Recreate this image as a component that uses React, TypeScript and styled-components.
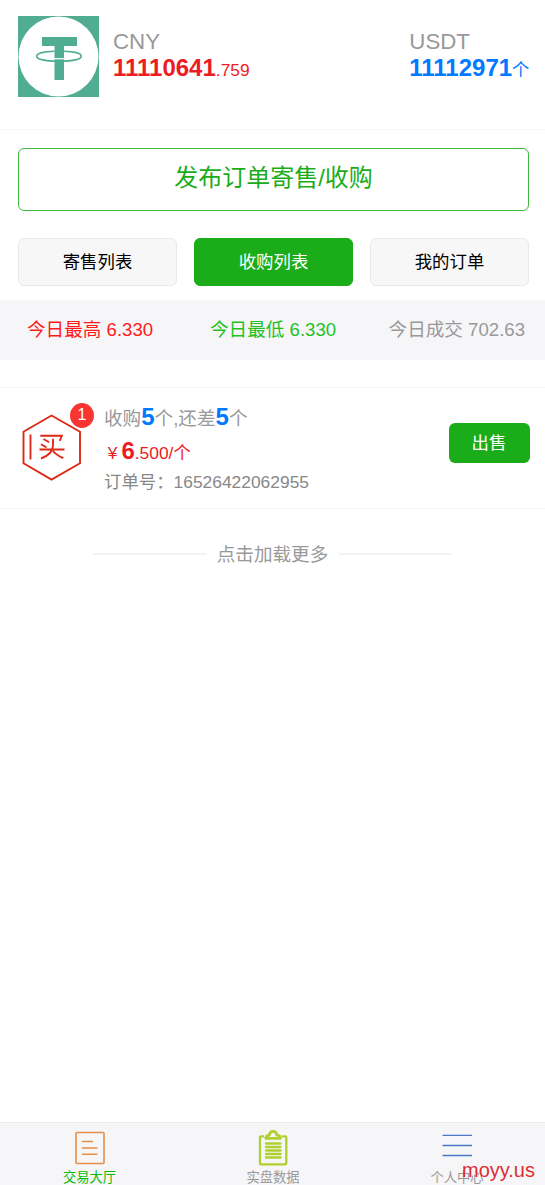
import React from 'react';
import styled, { createGlobalStyle } from 'styled-components';

const GlobalStyle = createGlobalStyle`
  * { box-sizing: border-box; }
  body {
    margin: 0;
    background: #fff;
    font-family: 'Liberation Sans', 'Noto Sans CJK SC', sans-serif;
    font-weight: 400;
  }
  button { font: inherit; padding: 0; cursor: pointer; }
`;

const Page = styled.div`
  display: flex;
  flex-direction: column;
  height: 1185px;
  overflow: hidden;
`;

const Header = styled.header`
  display: flex;
  height: 130px;
  padding: 16px 15.500px 0 18px;
  border-bottom: 1px solid #f7f7f7;
`;

const Balance = styled.div<{ $push?: boolean }>`
  margin-left: ${(p) => (p.$push ? 'auto' : '14px')};
  padding-top: 13px;
  white-space: nowrap;
`;

const Currency = styled.div`
  font-size: 22.3px;
  line-height: 26px;
  color: #999;
`;

const Amount = styled.div<{ $color: string }>`
  font-size: 17.4px;
  line-height: 30px;
  color: ${(p) => p.$color};
`;

const Big = styled.b<{ $color?: string }>`
  font-size: 24px;
  font-weight: 700;
  line-height: 24px;
  color: ${(p) => p.$color ?? 'inherit'};
`;

const Publish = styled.button`
  height: 63px;
  margin: 18px 16px 0 18px;
  border: 1px solid #3fb83f;
  border-radius: 6px;
  background: #fff;
  color: #1aad19;
  font-size: 24px;
  line-height: 56px;
  padding-bottom: 3px;
`;

const Tabs = styled.nav`
  display: grid;
  grid-template-columns: 159px 159px 159px;
  justify-content: space-between;
  height: 48px;
  margin: 27px 16px 14px 18px;
`;

const Tab = styled.button<{ $active?: boolean }>`
  border: 1px solid ${(p) => (p.$active ? '#1aad19' : '#e9e9e9')};
  border-radius: 6px;
  background: ${(p) => (p.$active ? '#1aad19' : '#f7f7f7')};
  color: ${(p) => (p.$active ? '#fff' : '#000')};
  font-size: 17.4px;
  line-height: 44px;
`;

const Stats = styled.section`
  display: grid;
  grid-template-columns: 183px 1fr auto;
  height: 60px;
  padding: 0 20px 0 27px;
  background: #f6f6f9;
`;

const Stat = styled.span<{ $color: string }>`
  color: ${(p) => p.$color};
  font-size: 18.6px;
  line-height: 59px;
  white-space: nowrap;
`;

const Order = styled.article`
  display: flex;
  height: 122px;
  margin-top: 27px;
  padding: 0 15.500px 0 22px;
  border-top: 1px solid #f5f5f5;
  border-bottom: 1px solid #f5f5f5;
`;

const OrderIcon = styled.div`
  position: relative;
  width: 60px;
  height: 68px;
  margin-top: 25px;
`;

const Badge = styled.span`
  position: absolute;
  top: -10px;
  left: 48px;
  width: 24px;
  height: 25px;
  border-radius: 50%;
  background: #f83530;
  color: #fff;
  font-size: 16px;
  line-height: 23px;
  text-align: center;
`;

const OrderInfo = styled.div`
  flex: 1;
  margin-left: 22px;
  padding-top: 13px;
  white-space: nowrap;
`;

const OrderLine = styled.div<{ $size: number; $height: number; $color: string }>`
  font-size: ${(p) => p.$size}px;
  height: ${(p) => p.$height}px;
  line-height: ${(p) => p.$height}px;
  color: ${(p) => p.$color};
`;

const Yuan = styled.span`
  display: inline-block;
  width: 17.4px;
  text-align: center;
`;

const Sell = styled.button`
  width: 81px;
  height: 40px;
  margin-top: 35px;
  border: 0;
  border-radius: 6px;
  background: #1aad19;
  color: #fff;
  font-size: 17.4px;
  line-height: 38px;
`;

const LoadMore = styled.div`
  display: flex;
  align-items: center;
  justify-content: center;
  gap: 10.500px;
  margin-top: 30px;
  height: 30px;
  color: #999;
  font-size: 18.6px;
  line-height: 32px;
  &::before, &::after {
    content: '';
    width: 113.500px;
    height: 2px;
    background: #f3f3f3;
  }
`;

const LoadLabel = styled.span`
  padding-top: 2px;
`;

const TabBar = styled.footer`
  display: grid;
  grid-template-columns: 179px 188px 180px;
  height: 63px;
  margin-top: auto;
  border-top: 1px solid #ededef;
  background: #f6f6f9;
`;

const TabItem = styled.a<{ $color: string }>`
  display: flex;
  flex-direction: column;
  align-items: center;
  padding-top: 5px;
  color: ${(p) => p.$color};
  font-size: 13.3px;
  line-height: 18px;
  svg { margin-bottom: 3px; }
`;

const SiteMark = styled.span`
  position: absolute;
  left: 462px;
  top: 1158px;
  color: #dc2f2f;
  font-size: 20px;
  line-height: 24px;
`;

const TetherLogo = () => (
  <svg width="81" height="81" viewBox="0 0 81 81">
    <rect width="81" height="81" fill="#50ad92" />
    <circle cx="40.5" cy="40.5" r="40" fill="#fff" />
    <path d="M24 21h35v9H46v34h-9.500V30H24z" fill="#50ad92" />
    <path d="M36 42.700h10.500" stroke="#fff" strokeWidth="1.2" />
    <path d="M36.500 35.300C26 35.500 18.700 37.500 18.700 40.200c0 3 8 5 22.300 5s22.300-2 22.300-5c0-2.700-7.300-4.700-17.800-4.900" fill="none" stroke="#50ad92" strokeWidth="1.6" />
  </svg>
);

const BuyIcon = () => (
  <svg width="60" height="68" viewBox="0 0 60 68" fill="none" stroke="#dc2a16" strokeWidth="1.9">
    <path d="M29.500 2.500L58 18.800V50.300L29.500 66.600 1.500 50.300V18.800z" />
    <path d="M8.500 21.500v25M18.300 22.800h21.500l-2 5M21.500 26l5.500 3.300M19 31.200l5.500 3.300M17.500 36.500h25M31 25.700v6.500c0 7-4.500 10.500-12 13.300M31 38c2.500 3.200 6 5.200 10.300 7.200" />
  </svg>
);

const HallIcon = () => (
  <svg width="30" height="38" viewBox="0 0 30 38" fill="none" stroke="#e58f47">
    <rect x="1" y="4.5" width="28" height="31" rx="1" strokeWidth="1.6" />
    <path d="M7 13.500h11M7 20h15.500M7 26.200h15.500" strokeWidth="1.6" />
  </svg>
);

const DataIcon = () => (
  <svg width="30" height="38" viewBox="0 0 30 38" fill="none" stroke="#b1cf2d">
    <path d="M6 8.400H3Q2 8.400 2 9.400V35.300Q2 36.400 3 36.400H27Q28.300 36.400 28.300 35.300V9.400Q28.300 8.400 27 8.400H24" strokeWidth="2.3" />
    <path d="M7.800 10.300Q7.800 7.500 11.300 7.200C12 2 18.300 2 19 7.200Q22.500 7.500 22.500 10.300z" strokeWidth="2.7" strokeLinejoin="round" />
    <path d="M8 15.500h14.500M8 19h14.500M8 22.500h14.500M8 26h14.500M8 29.500h14.500" strokeWidth="2.3" strokeLinecap="round" />
  </svg>
);

const MenuIcon = () => (
  <svg width="30" height="38" viewBox="0 0 30 38" fill="none" stroke="#4a7ac6" strokeWidth="1.3">
    <path d="M0.500 7.300h30M0.500 17.500h30M0.500 27.500h30" />
  </svg>
);

export default function App() {
  return (
    <Page>
      <GlobalStyle />
      <Header>
        <TetherLogo />
        <Balance>
          <Currency>CNY</Currency>
          <Amount $color="#ed1c24"><Big>11110641</Big>.759</Amount>
        </Balance>
        <Balance $push>
          <Currency>USDT</Currency>
          <Amount $color="#007aff"><Big>11112971</Big>个</Amount>
        </Balance>
      </Header>
      <Publish>发布订单寄售/收购</Publish>
      <Tabs>
        <Tab>寄售列表</Tab>
        <Tab $active>收购列表</Tab>
        <Tab>我的订单</Tab>
      </Tabs>
      <Stats>
        <Stat $color="#ff1a1a">今日最高 6.330</Stat>
        <Stat $color="#1fc21f">今日最低 6.330</Stat>
        <Stat $color="#999">今日成交 702.63</Stat>
      </Stats>
      <Order>
        <OrderIcon>
          <BuyIcon />
          <Badge>1</Badge>
        </OrderIcon>
        <OrderInfo>
          <OrderLine $size={18.6} $height={36} $color="#999">
            收购<Big $color="#007aff">5</Big>个,还差<Big $color="#007aff">5</Big>个
          </OrderLine>
          <OrderLine $size={17.4} $height={32} $color="#ed1c24">
            <Yuan>¥</Yuan><Big>6</Big>.500/个
          </OrderLine>
          <OrderLine $size={17.4} $height={27} $color="#888">{'订单号\uff1a16526422062955'}</OrderLine>
        </OrderInfo>
        <Sell>出售</Sell>
      </Order>
      <LoadMore><LoadLabel>点击加载更多</LoadLabel></LoadMore>
      <TabBar>
        <TabItem $color="#09bb07"><HallIcon />交易大厅</TabItem>
        <TabItem $color="#999"><DataIcon />实盘数据</TabItem>
        <TabItem $color="#999"><MenuIcon />个人中心</TabItem>
      </TabBar>
      <SiteMark>moyy.us</SiteMark>
    </Page>
  );
}
